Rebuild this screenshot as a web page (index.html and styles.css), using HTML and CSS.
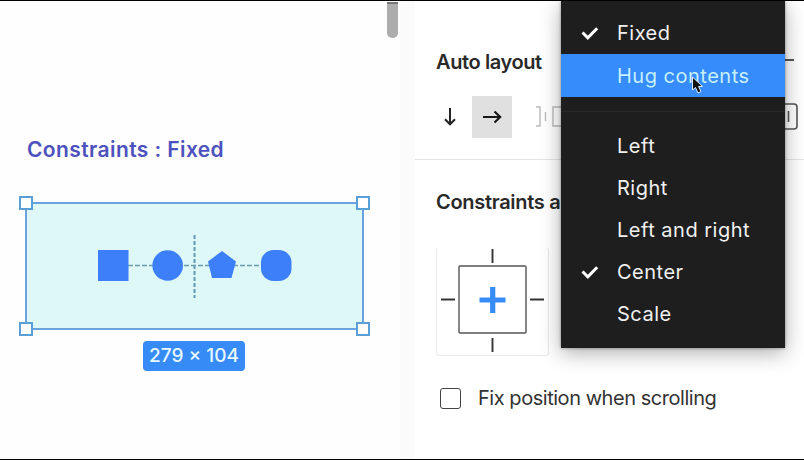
FILE: index.html
```html
<!DOCTYPE html>
<html lang="en">
<head>
<meta charset="utf-8">
<title>Constraints</title>
<link rel="stylesheet" href="styles.css">
</head>
<body>
<div class="app">
  <main class="canvas">
    <div class="scrollbar"></div>
    <h1 class="canvas-title"><span>Constraints : Fixed</span></h1>
    <div class="frame">
      <i class="handle tl"></i><i class="handle tr"></i><i class="handle bl"></i><i class="handle br"></i>
      <svg class="shapes" width="335" height="124" viewBox="27 204 335 124">
        <path d="M128 265.500H262" stroke="#6aa0ad" stroke-width="1.500" stroke-dasharray="5 2" fill="none"/>
        <path d="M194.500 235V298" stroke="#6199b8" stroke-width="2" stroke-dasharray="4 2" fill="none"/>
        <g fill="#3d7ff8">
          <rect x="98" y="250" width="30.500" height="31"/>
          <circle cx="167.700" cy="265.500" r="15.300"/>
          <path d="M222 251L236 261.500L231.500 278H212L208 261.500Z"/>
          <rect x="261" y="250" width="30.500" height="31" rx="12.500"/>
        </g>
      </svg>
    </div>
    <div class="size"><span>279 × 104</span></div>
  </main>
  <aside class="panel">
    <section class="auto">
      <h2><span class="t-auto">Auto layout</span></h2>
      <div class="tools">
        <button class="tool"><svg width="16" height="20" viewBox="0 0 16 20"><path d="M8 1V17M3 12.200L8 17.300L13 12.200" fill="none" stroke="#222" stroke-width="2"/></svg></button>
        <button class="tool on"><svg width="22" height="16" viewBox="0 0 22 16"><path d="M2 8H19M13.500 2.500L19.200 8L13.500 13.500" fill="none" stroke="#181818" stroke-width="2.200"/></svg></button>
        <svg class="spacing" width="26" height="24" viewBox="0 0 26 24"><path d="M1 2H5V21H1M10.500 7V16M22 2H18V21H22M18 2H26M18 21H26" fill="none" stroke="#bababa" stroke-width="1.400"/></svg>
        <svg class="padding" width="34" height="28" viewBox="0 0 34 28"><rect x="1" y="1" width="31" height="25" rx="3" fill="none" stroke="#555" stroke-width="1.600"/><path d="M23.500 8V19" stroke="#555" stroke-width="1.600"/></svg>
      </div>
    </section>
    <section class="constraints">
      <h2><span class="t-cons">Constraints a</span></h2>
      <div class="widget">
        <svg width="112" height="107" viewBox="1 0 112 107"><g fill="none" stroke="#333" stroke-width="1.900"><path d="M56.500 1V15M56.500 90V104M5 51.500H19M94 51.500H108"/><rect x="23" y="18" width="67" height="67" rx="1" fill="#fff" stroke="#555" stroke-width="1.400"/></g><path d="M56.700 39V65M43.500 52H69.500" stroke="#368df5" stroke-width="5.200"/></svg>
      </div>
      <label class="fix"><span class="box"></span><span class="t-fix">Fix position when scrolling</span></label>
    </section>
  </aside>
  <i class="dash"></i>
  <nav class="menu">
    <div class="item"><svg class="check" width="20" height="16" viewBox="0 0 20 16"><path d="M2.500 7.500L7.800 12.800L17.200 3.200" fill="none" stroke="#fff" stroke-width="3"/></svg><span>Fixed</span></div>
    <div class="item active"><span>Hug contents</span></div>
    <hr>
    <div class="item"><span>Left</span></div>
    <div class="item"><span>Right</span></div>
    <div class="item"><span>Left and right</span></div>
    <div class="item"><svg class="check" width="20" height="16" viewBox="0 0 20 16"><path d="M2.500 7.500L7.800 12.800L17.200 3.200" fill="none" stroke="#fff" stroke-width="3"/></svg><span>Center</span></div>
    <div class="item"><span>Scale</span></div>
  </nav>
  <svg class="cursor" width="14" height="19" viewBox="0 0 14 19"><path d="M1.500 1V14L4.500 11.500L7 17L10 15.500L7.500 10.500H11.500Z" fill="#111" stroke="#dcecff" stroke-width="1"/></svg>
</div>
</body>
</html>
```
FILE: styles.css
```css
* { box-sizing: border-box; }
body { margin: 0; font-family: Inter, "Liberation Sans", sans-serif; background: #fff; }
.app { position: relative; display: flex; width: 804px; height: 460px; overflow: hidden; border-top: 1px solid #000; border-bottom: 1px solid #000; }
.canvas { position: relative; width: 400px; padding: 135px 0 0 25px; background: #fefefe; }
.scrollbar { position: absolute; left: 387px; top: 1px; width: 11px; height: 36px; border-radius: 0 0 5px 5px; background: #adadad; border-top: 2px solid #777; }
.canvas-title { margin: 0 0 0 2px; height: 28px; line-height: 28px; font-size: 21px; font-weight: 600; color: #4d51bd; letter-spacing: .4px; white-space: nowrap; }
.frame { position: relative; width: 339px; height: 128px; margin-top: 38px; border: 2px solid #69a2df; background: #def7f7; }
.shapes { display: block; }
.handle { position: absolute; width: 14px; height: 14px; border: 2px solid #5b9fd7; background: #fff; }
.tl { left: -8px; top: -8px; }
.tr { right: -8px; top: -8px; }
.bl { left: -8px; bottom: -8px; }
.br { right: -8px; bottom: -8px; }
.size { width: 102px; height: 30px; margin: 11px 0 0 118px; border-radius: 4px; background: #368bf7; color: #e8f8ff; font-size: 19px; font-weight: 500; line-height: 30px; text-align: center; white-space: nowrap; }
.panel { flex: 1; background: #fff; border-left: 15px solid #fbfbfb; }
h2 { margin: 0; font-size: 20px; line-height: 24px; font-weight: 600; color: #292929; padding-left: 21px; white-space: nowrap; }
.t-auto { letter-spacing: -.4px; }
.auto { height: 159px; padding-top: 49px; border-bottom: 1px solid #e5e5e5; }
.tools { display: flex; align-items: center; height: 42px; margin-top: 22px; padding-left: 15px; }
.tool { display: flex; align-items: center; justify-content: center; width: 40px; height: 42px; padding: 0; border: 0; background: none; }
.tool.on { background: #e0e0e0; margin-left: 2px; }
.spacing { margin-left: 23px; }
.padding { margin-left: 204px; }
.constraints { padding-top: 30px; }
.t-cons { letter-spacing: -.3px; }
.widget { width: 113px; height: 108px; margin: 34px 0 0 21px; border: 1px solid #e9e9e9; border-top: 0; border-radius: 3px; }
.widget svg { display: block; }
.fix { display: flex; align-items: center; height: 28px; margin: 28px 0 0 25px; color: #333; font-size: 20px; letter-spacing: -.46px; white-space: nowrap; }
.box { width: 21px; height: 21px; margin-right: 17px; border: 1.500px solid #444; border-radius: 3px; }
.dash { position: absolute; left: 785px; top: 58px; width: 9px; height: 2px; background: #555; }
.menu { position: absolute; left: 561px; top: 0; width: 224px; height: 347px; padding-top: 11px; background: #1e1e1e; color: #f1f1f1; font-size: 20px; box-shadow: 0 5px 20px rgba(0,0,0,.32), 0 0 3px rgba(0,0,0,.4); }
.item { display: flex; align-items: center; height: 42px; padding-left: 56px; position: relative; white-space: nowrap; letter-spacing: .5px; }
.item.active { height: 43px; background: #368cfb; color: #c6efff; }
.check { position: absolute; left: 19px; top: 13px; }
.menu hr { height: 1px; margin: 14px 0 13px; border: 0; background: #292929; }
.cursor { position: absolute; left: 691px; top: 75px; }
```
